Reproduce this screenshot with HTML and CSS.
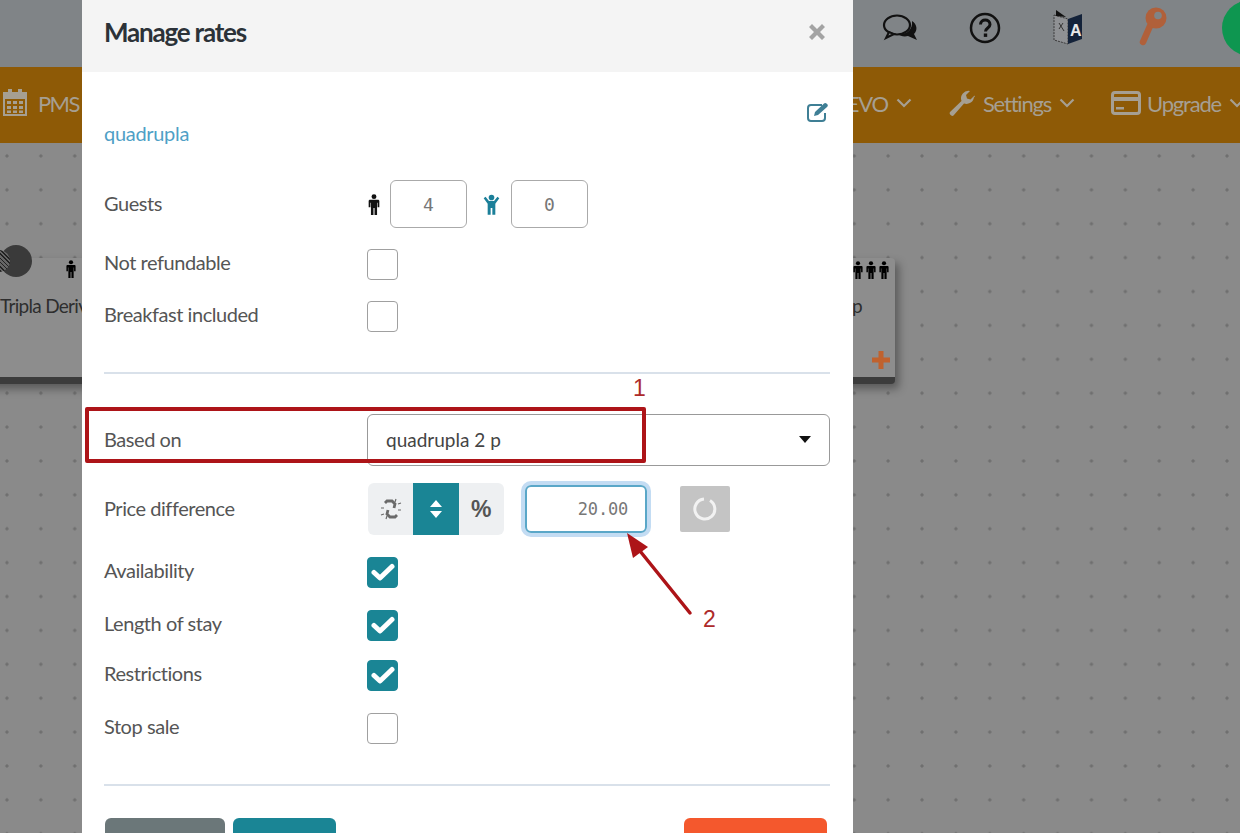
FILE: index.html
```html
<!DOCTYPE html>
<html lang="en">
<head>
<meta charset="utf-8">
<title>Manage rates</title>
<link rel="stylesheet" href="styles.css">
</head>
<body>
<svg class="defs" width="0" height="0" aria-hidden="true">
  <symbol id="man" viewBox="0 0 16 24">
    <circle cx="8" cy="3" r="2.800"/>
    <path d="M3.500 6.500h9c1 0 1.600.7 1.600 1.600v7h-2v-5h-.6V24H8.600v-8H7.400v8H4.500V10.100h-.6v5h-2v-7c0-.9.6-1.600 1.600-1.600z"/>
  </symbol>
  <symbol id="child" viewBox="0 0 20 24">
    <circle cx="10" cy="3.800" r="3.300"/>
    <path d="M.8 4.500 3 2.800 7 7.800h6l4-5 2.200 1.700-4.700 6.500V24H11v-8H9v8H5.500V11z"/>
  </symbol>
  <symbol id="chev" viewBox="0 0 16 10">
    <path d="M1.500 1.500 8 8l6.500-6.500" fill="none" stroke="currentColor" stroke-width="2.200"/>
  </symbol>
  <symbol id="check" viewBox="0 0 24 19">
    <path d="M3 9.500 9 15 21 3.500" fill="none" stroke="#fff" stroke-width="5" stroke-linecap="round" stroke-linejoin="round"/>
  </symbol>
</svg>

<div class="page">
  <header class="topbar">
    <svg class="top-icon icon-chat" width="38" height="30" viewBox="0 0 38 30">
      <ellipse cx="15" cy="12" rx="13" ry="9.500" fill="none" stroke="#111" stroke-width="2.200"/>
      <path d="M7 19 4 25l8-4z" fill="#808486" stroke="#111" stroke-width="2"/>
      <path d="M30 8c5 3 6 9 2 13l3 6-9-4c-4 1-8 0-10-2 8 1 15-4 14-13z" fill="#111"/>
    </svg>
    <svg class="top-icon icon-help" width="32" height="32" viewBox="0 0 32 32">
      <circle cx="16" cy="16" r="14" fill="none" stroke="#111" stroke-width="2.500"/>
      <path d="M11.500 12.500c0-6 9.500-6 9.500 0 0 3.500-4.500 3.500-4.500 7" fill="none" stroke="#111" stroke-width="3"/>
      <rect x="14.800" y="21.500" width="3.400" height="3.400" fill="#111"/>
    </svg>
    <svg class="top-icon icon-lang" width="34" height="38" viewBox="0 0 34 38">
      <path d="M3 6 17 10v25L3 31z" fill="#8f9194" stroke="#3a3a3a" stroke-width="1" stroke-dasharray="2 1"/>
      <path d="M5 1 15 8 5 7z" fill="#111"/>
      <path d="M8 14l5 8M12 14l-4 6" fill="none" stroke="#333" stroke-width="1"/>
      <path d="M17 10 31 5v25l-14 5z" fill="#14233a"/>
      <text class="xlate" x="19" y="27">A</text>
    </svg>
    <svg class="top-icon icon-key" width="30" height="40" viewBox="0 0 30 40">
      <path d="M13 20 6 36" fill="none" stroke="#b0603a" stroke-width="6.500" stroke-linecap="round"/>
      <circle cx="19" cy="12" r="10.500" fill="#b0603a"/>
      <circle cx="21" cy="9.500" r="3.800" fill="#808486"/>
    </svg>
    <span class="avatar"></span>
  </header>

  <nav class="navbar">
    <div class="nav-group">
      <span class="nav-item">
        <svg width="26" height="28" viewBox="0 0 26 28"><path d="M6 0h4v5H6zM16 0h4v5h-4z" fill="#a69f92"/><path d="M1 3h24v24H1zM3 10v15h20V10z M5 12h4v3H5zM11 12h4v3h-4zM17 12h4v3h-4zM5 17h4v3H5zM11 17h4v3h-4zM17 17h4v3h-4zM5 21.500h4v2.500H5zM11 21.500h4v2.500h-4zM17 21.500h4v2.500h-4z" fill="#a69f92" fill-rule="evenodd"/></svg>
        <span class="nav-pms">PMS</span>
      </span>
    </div>
    <div class="nav-group nav-right">
      <span class="nav-item">EVO <svg class="chev" width="16" height="10"><use href="#chev"/></svg></span>
      <span class="nav-item">
        <svg width="27" height="27" viewBox="0 0 27 27"><path d="M26 6.500a7.500 7.500 0 0 1-10 7L5.500 25.500c-1.500 1.500-5-1.500-3.500-3.500L13.500 11a7.500 7.500 0 0 1 8.500-10l-4 4 1 3.500 3.500 1 4-4c.3.600.5 1.300.5 2z" fill="#a69f92"/></svg>
        Settings <svg class="chev" width="16" height="10"><use href="#chev"/></svg>
      </span>
      <span class="nav-item">
        <svg class="card" width="30" height="24" viewBox="0 0 30 24"><rect x="1.500" y="1.500" width="27" height="21" rx="2.500" fill="none" stroke="#a69f92" stroke-width="3"/><rect x="2" y="6" width="26" height="4" fill="#a69f92"/><rect x="5" y="16" width="8" height="2.500" fill="#a69f92"/></svg>
        Upgrade <svg class="chev" width="16" height="10"><use href="#chev"/></svg>
      </span>
    </div>
  </nav>

  <main class="canvas">
    <div class="node node-left">
      <span class="node-hatch"></span>
      <span class="node-dot"></span>
      <svg class="node-man" width="12" height="18"><use href="#man"/></svg>
      <span class="node-name">Tripla Deriv</span>
    </div>
    <div class="node node-right">
      <div class="node-people">
        <svg width="12" height="18"><use href="#man"/></svg>
        <svg width="12" height="18"><use href="#man"/></svg>
        <svg width="12" height="18"><use href="#man"/></svg>
      </div>
      <span class="node-p">p</span>
      <svg class="node-plus" width="18" height="18" viewBox="0 0 18 18"><path d="M6.500 0h5v6.500H18v5h-6.500V18h-5v-6.500H0v-5h6.500z" fill="#c0622e"/></svg>
    </div>
  </main>
</div>

<section class="modal">
  <div class="modal-head">
    <h1 class="modal-title">Manage rates</h1>
    <svg class="close" width="16" height="16" viewBox="0 0 16 16"><path d="M3 0 8 5l5-5 3 3-5 5 5 5-3 3-5-5-5 5-3-3 5-5-5-5z" fill="#a3a3a3"/></svg>
  </div>
  <div class="modal-body">
    <div class="edit-row">
      <svg width="22" height="20" viewBox="0 0 22 20"><path d="M15 3H4a3 3 0 0 0-3 3v10a3 3 0 0 0 3 3h11a3 3 0 0 0 3-3v-5" fill="none" stroke="#3f7f95" stroke-width="2"/><path d="M7 14l1-4L17 1.500c.8-.8 1.800-.8 2.500 0l.8.8c.7.7.7 1.700 0 2.400L11 13z" fill="#3f7f95"/></svg>
    </div>
    <div class="rate-name">quadrupla</div>

    <div class="row row-guests">
      <span class="label">Guests</span>
      <div class="guests">
        <svg class="man" width="14" height="21"><use href="#man"/></svg>
        <span class="num-box">4</span>
        <svg class="kid" width="17" height="21"><use href="#child"/></svg>
        <span class="num-box">0</span>
      </div>
    </div>
    <div class="row row-refund">
      <span class="label label-check">Not refundable</span>
      <span class="check"></span>
    </div>
    <div class="row row-break">
      <span class="label label-check">Breakfast included</span>
      <span class="check"></span>
    </div>

    <hr class="rule rule-a">

    <div class="row row-based">
      <span class="label">Based on</span>
      <div class="select">quadrupla 2 p<span class="caret"></span></div>
    </div>
    <div class="row row-price">
      <span class="label">Price difference</span>
      <div class="price">
        <div class="segments">
          <span class="seg">
            <svg width="24" height="24" viewBox="0 0 24 24" fill="none" stroke="#6a6a6a" stroke-width="2.800"><path d="M6 6l2-2h5l3 3-1 4"/><path d="M18 18l-2 2h-5l-3-3 1-4"/><path d="M17 2l-1 3M22 6l-3 1M7 22l1-3M2 18l3-1M2 11h3M19 13h3" stroke-width="1.200"/></svg>
          </span>
          <span class="seg seg-on">
            <svg width="14" height="20" viewBox="0 0 14 20"><path d="M7 1 13 8H1zM7 19 1 12h12z" fill="#fff"/></svg>
          </span>
          <span class="seg seg-pct">%</span>
        </div>
        <span class="amount">20.00</span>
        <span class="reset">
          <svg width="26" height="26" viewBox="0 0 26 26"><path d="M18 4.500a10 10 0 1 1-6-1.400" fill="none" stroke="#f2f2f2" stroke-width="3"/></svg>
        </span>
      </div>
    </div>
    <div class="row row-avail">
      <span class="label label-check">Availability</span>
      <span class="check check-on"><svg width="24" height="19"><use href="#check"/></svg></span>
    </div>
    <div class="row row-stay">
      <span class="label label-check">Length of stay</span>
      <span class="check check-on"><svg width="24" height="19"><use href="#check"/></svg></span>
    </div>
    <div class="row row-restr">
      <span class="label label-check">Restrictions</span>
      <span class="check check-on"><svg width="24" height="19"><use href="#check"/></svg></span>
    </div>
    <div class="row row-stop">
      <span class="label label-check">Stop sale</span>
      <span class="check"></span>
    </div>

    <hr class="rule rule-b">

    <div class="actions">
      <span class="btn btn-gray"></span>
      <span class="btn btn-teal"></span>
      <span class="btn btn-orange"></span>
    </div>
  </div>
</section>

<div class="mark-box"></div>
<span class="mark-num mark-one">1</span>
<span class="mark-num mark-two">2</span>
<svg class="mark-arrow" width="80" height="100" viewBox="0 0 80 100">
  <path d="M67 88 17 26" fill="none" stroke="#ad1418" stroke-width="3.500" stroke-linecap="round"/>
  <path d="M4 8 25 22 10 33z" fill="#ad1418"/>
</svg>
</body>
</html>
```

FILE: styles.css
```css
* { box-sizing: border-box; }

html, body {
  margin: 0;
  height: 100%;
  overflow: hidden;
}

body {
  font-family: "Lato", "Noto Sans", sans-serif;
  color: #555;
  background: #8a8a8a;
}

.defs { position: absolute; }

.page {
  display: flex;
  flex-direction: column;
  height: 833px;
  width: 1240px;
  overflow: hidden;
}

.topbar {
  height: 67px;
  flex: none;
  background: #808487;
  display: flex;
  align-items: center;
  justify-content: flex-end;
  position: relative;
}

.top-icon { flex: none; }
.icon-chat { margin-right: 49px; margin-top: -11px; }
.icon-help { margin-right: 50px; margin-top: -12px; }
.icon-lang { margin-right: 52px; margin-top: -12px; }
.icon-key { margin-right: 73px; margin-top: -16px; }

.xlate {
  font: 700 16px "Liberation Sans", sans-serif;
  fill: #e8e8e8;
}

.avatar {
  position: absolute;
  left: 1222px;
  top: 0;
  width: 56px;
  height: 56px;
  border-radius: 50%;
  background: #0e9650;
}

.navbar {
  height: 76px;
  flex: none;
  background: #8e5a06;
  display: flex;
  justify-content: space-between;
  align-items: center;
  padding-bottom: 4px;
  color: #a69f92;
  font-size: 22px;
  letter-spacing: -1.2px;
  white-space: nowrap;
}

.nav-group {
  display: flex;
  align-items: center;
  gap: 36px;
}

.nav-group:first-child { margin-left: 2px; }
.nav-right { margin-right: -5px; }

.nav-item {
  display: inline-flex;
  align-items: center;
  gap: 8px;
}

.nav-pms { margin-left: 2px; letter-spacing: -1.6px; }
.card { margin-right: -2px; }
.chev { color: #a69f92; }

.canvas {
  flex: 1;
  position: relative;
  background-color: #8a8a8a;
  background-image: radial-gradient(circle, #6f6f6f 1.400px, transparent 1.800px);
  background-size: 33.900px 33.900px;
  background-position: -10px -4px;
}

.node {
  position: absolute;
  top: 115px;
  height: 126px;
  background: #8d8d8d;
  border-bottom: 7px solid #3c3c3c;
  box-shadow: 4px 5px 8px rgba(0, 0, 0, .35);
  border-radius: 4px;
}

.node-left { left: -20px; width: 110px; }
.node-right { left: 840px; width: 55px; }

.node-hatch {
  position: absolute;
  left: 8px;
  top: -8px;
  width: 22px;
  height: 22px;
  border-radius: 50%;
  background: repeating-linear-gradient(45deg, #222 0 1px, #666 1px 3px);
}

.node-dot {
  position: absolute;
  left: 20px;
  top: -13px;
  width: 32px;
  height: 32px;
  border-radius: 50%;
  background: #3a3a3a;
}

.node-hatch { z-index: 1; }

.node-man {
  position: absolute;
  left: 85px;
  top: 2px;
}

.node-name {
  position: absolute;
  left: 20px;
  top: 36px;
  font-size: 19px;
  letter-spacing: -0.7px;
  color: #2e2e2e;
  white-space: nowrap;
}

.node-people {
  position: absolute;
  right: 5px;
  top: 3px;
  display: flex;
  gap: 1px;
}

.node-p {
  position: absolute;
  left: 12px;
  top: 36px;
  font-size: 19px;
  color: #2e2e2e;
}

.node-plus {
  position: absolute;
  right: 5px;
  bottom: 8px;
}

.modal {
  position: absolute;
  left: 82px;
  top: 0;
  width: 771px;
  height: 833px;
  background: #fff;
  overflow: hidden;
}

.modal-head {
  height: 72px;
  background: #f4f4f4;
  display: flex;
  align-items: center;
  justify-content: space-between;
  padding: 0 28px 8px 22px;
}

.modal-title {
  margin: 0;
  font-size: 26px;
  font-weight: 700;
  letter-spacing: -1.2px;
  color: #2c3238;
}

.modal-body {
  padding: 0 23px 0 22px;
}

.edit-row {
  height: 20px;
  margin-top: 30px;
  display: flex;
  justify-content: flex-end;
  padding-right: 1px;
}

.rate-name {
  height: 24px;
  line-height: 22px;
  font-size: 20px;
  letter-spacing: -0.3px;
  color: #4f9fc6;
}

.row {
  display: grid;
  grid-template-columns: 263px 1fr;
  align-items: center;
}

.label {
  font-size: 20px;
  letter-spacing: -0.45px;
  color: #555;
  padding-bottom: 3px;
}

.label-check { padding-bottom: 6px; }

.row-guests { margin-top: 34px; height: 48px; }
.row-refund { margin-top: 21px; height: 31px; }
.row-break { margin-top: 21px; height: 31px; }
.row-based { margin-top: 40px; height: 52px; }
.row-price { margin-top: 17px; height: 52px; }
.row-avail { margin-top: 22px; height: 31px; }
.row-stay { margin-top: 22px; height: 31px; }
.row-restr { margin-top: 19px; height: 31px; }
.row-stop { margin-top: 22px; height: 31px; }

.guests {
  display: flex;
  align-items: center;
}

.man { margin-right: 9px; fill: #111; }
.kid { margin: 0 11px 0 16px; fill: #1b7f99; }

.num-box {
  width: 77px;
  height: 48px;
  border: 1px solid #aaa;
  border-radius: 6px;
  display: flex;
  align-items: center;
  justify-content: center;
  font: 18px "DejaVu Sans Mono", monospace;
  color: #777;
}

.check {
  width: 31px;
  height: 31px;
  border: 1px solid #a0a0a0;
  border-radius: 4px;
  background: #fff;
  display: flex;
  align-items: center;
  justify-content: center;
}

.check-on {
  background: #1a8595;
  border-color: #1a8595;
}

.rule {
  margin: 0;
  border: 0;
  height: 2px;
  background: #d9e1ea;
}

.rule-a { margin-top: 40px; }
.rule-b { margin-top: 40px; }

.select {
  position: relative;
  height: 52px;
  border: 1px solid #999;
  border-radius: 6px;
  background: #fff;
  padding-left: 18px;
  padding-bottom: 2px;
  display: flex;
  align-items: center;
  font-size: 19px;
  letter-spacing: 0;
  color: #444;
}

.caret {
  position: absolute;
  right: 18px;
  top: 21px;
  border: 6px solid transparent;
  border-top: 7px solid #111;
  border-bottom: 0;
}

.price {
  display: flex;
  align-items: center;
  padding-left: 1px;
}

.segments {
  display: flex;
  width: 136px;
  height: 52px;
  background: #eef0f2;
  border-radius: 6px;
  overflow: hidden;
}

.seg {
  flex: 1;
  display: flex;
  align-items: center;
  justify-content: center;
}

.seg-on { background: #1a8595; }

.seg-pct {
  font: 700 23px "Liberation Sans", sans-serif;
  color: #555;
}

.amount {
  width: 122px;
  height: 48px;
  margin-left: 21px;
  border: 2px solid #5aa7c8;
  border-radius: 6px;
  box-shadow: 0 0 0 4px #c3dcf3;
  display: flex;
  align-items: center;
  justify-content: flex-end;
  padding-right: 17px;
  font: 17px "DejaVu Sans Mono", monospace;
  letter-spacing: -0.200px;
  color: #777;
}

.reset {
  width: 50px;
  height: 46px;
  margin-left: 33px;
  background: #c4c4c4;
  border-radius: 2px;
  display: flex;
  align-items: center;
  justify-content: center;
}

.actions {
  margin-top: 32px;
  display: flex;
  gap: 8px;
}

.btn {
  height: 50px;
  border-radius: 6px 6px 0 0;
  display: block;
}

.btn-gray { width: 120px; margin-left: 1px; background: #6b7779; }
.btn-teal { width: 103px; background: #1a8595; }
.btn-orange { width: 143px; margin-left: auto; margin-right: 3px; background: #f4582d; }

.mark-box {
  position: absolute;
  left: 85px;
  top: 407px;
  width: 561px;
  height: 56px;
  border: 4px solid #ad1418;
  border-radius: 2px;
}

.mark-num {
  position: absolute;
  font: 23px "Liberation Sans", sans-serif;
  color: #ad2a2a;
}

.mark-one { left: 633px; top: 375px; }
.mark-two { left: 703px; top: 606px; }

.mark-arrow {
  position: absolute;
  left: 623px;
  top: 525px;
}
```
